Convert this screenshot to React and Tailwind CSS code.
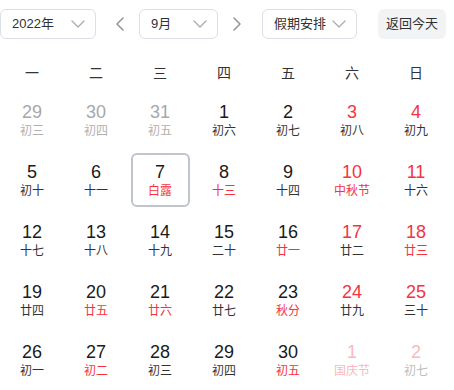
import { ChevronDown, ChevronLeft, ChevronRight } from 'lucide-react';

const weekdays = ['一', '二', '三', '四', '五', '六', '日'];

// out: previous month, next: next month; red = red number, lred = red lunar text
const days = [
    { d: 29, l: '初三', out: true }, { d: 30, l: '初四', out: true }, { d: 31, l: '初五', out: true },
    { d: 1, l: '初六' }, { d: 2, l: '初七' }, { d: 3, l: '初八', red: true }, { d: 4, l: '初九', red: true },

    { d: 5, l: '初十' }, { d: 6, l: '十一' }, { d: 7, l: '白露', lred: true, selected: true },
    { d: 8, l: '十三', lred: true }, { d: 9, l: '十四' }, { d: 10, l: '中秋节', red: true, lred: true }, { d: 11, l: '十六', red: true },

    { d: 12, l: '十七' }, { d: 13, l: '十八' }, { d: 14, l: '十九' },
    { d: 15, l: '二十' }, { d: 16, l: '廿一', lred: true }, { d: 17, l: '廿二', red: true }, { d: 18, l: '廿三', red: true, lred: true },

    { d: 19, l: '廿四' }, { d: 20, l: '廿五', lred: true }, { d: 21, l: '廿六', lred: true },
    { d: 22, l: '廿七' }, { d: 23, l: '秋分', lred: true }, { d: 24, l: '廿九', red: true }, { d: 25, l: '三十', red: true },

    { d: 26, l: '初一' }, { d: 27, l: '初二', lred: true }, { d: 28, l: '初三' },
    { d: 29, l: '初四' }, { d: 30, l: '初五', lred: true },
    { d: 1, l: '国庆节', next: true, lred: true }, { d: 2, l: '初七', next: true },
];

const Select = ({ label, width }) => (
    <div className={`${width} h-[30px] flex items-center justify-between pl-[11px] pr-[5px] border border-[#dcdfe6] rounded-[6px] text-[13px] text-[#303133] bg-white whitespace-nowrap`}>
        <span>{label}</span>
        <ChevronDown size={24} strokeWidth={1.3} className="shrink-0 -ml-[4px] text-[#a8abb2]" />
    </div>
);

const dateColor = (day) => {
    if (day.out) return 'text-[#a8a8a8]';
    if (day.next) return 'text-[#f9b9be]';
    if (day.red) return 'text-[#f5333f]';
    return 'text-[#1a1a1a]';
};

const lunarColor = (day) => {
    if (day.out) return 'text-[#b0b0b0]';
    if (day.next) return day.lred ? 'text-[#f9b9be]' : 'text-[#bdbdbd]';
    if (day.lred) return 'text-[#f5333f]';
    return 'text-[#333333]';
};

const App = () => {
    return (
        <div className="w-[454px] h-[390px] bg-white overflow-hidden font-['Liberation_Sans','Noto_Sans_CJK_SC',sans-serif]">
            {/* Toolbar */}
            <div className="flex items-center pt-[9px]">
                <Select label="2022年" width="w-[96px]" />
                <ChevronLeft size={24} strokeWidth={1.5} className="shrink-0 ml-[12px] text-[#909399]" />
                <div className="ml-[7px]">
                    <Select label="9月" width="w-[79px]" />
                </div>
                <ChevronRight size={24} strokeWidth={1.5} className="shrink-0 ml-[7px] text-[#909399]" />
                <div className="ml-[13px]">
                    <Select label="假期安排" width="w-[95px]" />
                </div>
                <button className="ml-[21px] w-[68px] h-[30px] shrink-0 rounded-[6px] bg-[#f2f3f5] text-[13px] text-[#303133] flex items-center justify-center whitespace-nowrap">
                    返回今天
                </button>
            </div>

            {/* Weekday header */}
            <div className="grid grid-cols-7 w-[448px] mt-[17px] h-[34px] items-center">
                {weekdays.map((w) => (
                    <div key={w} className="text-center text-[14px] text-[#333333]">{w}</div>
                ))}
            </div>

            {/* Days */}
            <div className="grid grid-cols-7 w-[448px]">
                {days.map((day, i) => (
                    <div key={i} className="h-[60px] flex items-center justify-center">
                        <div
                            className={`w-[59px] h-[54px] flex flex-col items-center justify-center rounded-[6px] border-2 ${
                                day.selected ? 'border-[#c0c4cc]' : 'border-transparent'
                            }`}
                        >
                            <span className={`text-[18px] leading-[22px] ${dateColor(day)}`}>{day.d}</span>
                            <span className={`text-[12px] leading-[16px] ${lunarColor(day)}`}>{day.l}</span>
                        </div>
                    </div>
                ))}
            </div>
        </div>
    );
};

export default App;
